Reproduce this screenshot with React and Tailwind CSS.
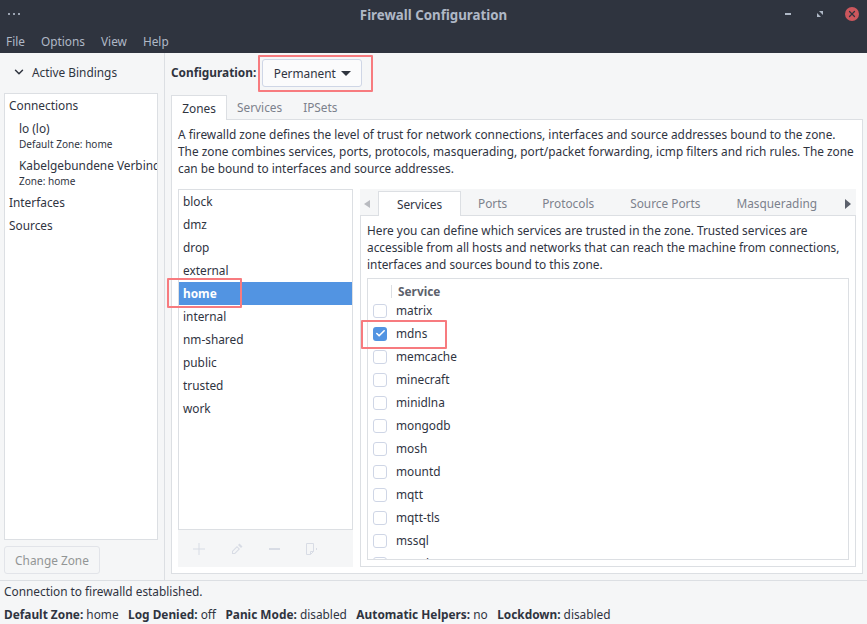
import { ChevronDown, Check, X } from "lucide-react";

const zones = ["block", "dmz", "drop", "external", "home", "internal", "nm-shared", "public", "trusted", "work"];
const services = ["matrix", "mdns", "memcache", "minecraft", "minidlna", "mongodb", "mosh", "mountd", "mqtt", "mqtt-tls", "mssql", "mysql"];

function Checkbox({ checked }) {
  if (checked) {
    return (
      <span className="flex h-[14px] w-[14px] items-center justify-center rounded-[3px] bg-[#5294e2]">
        <Check size={11} strokeWidth={3.5} className="text-white" />
      </span>
    );
  }
  return <span className="block h-[14px] w-[14px] rounded-[3px] border border-[#cfd6e6] bg-white" />;
}

function StatusItem({ label, value }) {
  return (
    <span>
      <b className="font-bold">{label}:</b> {value}
    </span>
  );
}

export default function App() {
  return (
    <div className="relative flex h-[624px] w-[867px] flex-col overflow-hidden bg-[#f5f6f7] font-['Noto_Sans',sans-serif] text-[11.85px] leading-[17px] text-[#2f343f]">
      <div className="bg-[#2f343f] text-[#afb8c6]">
        <div className="relative flex h-[30px] items-center justify-center">
          <div className="absolute left-[8px] top-[13px] flex gap-[3px]">
            <span className="block h-[2px] w-[2px] bg-[#9aa2b0]" />
            <span className="block h-[2px] w-[2px] bg-[#9aa2b0]" />
            <span className="block h-[2px] w-[2px] bg-[#9aa2b0]" />
          </div>
          <span className="text-[13.3px] font-bold">Firewall Configuration</span>
          <div className="absolute right-[8px] top-[7px] flex items-center">
            <span className="block h-[2px] w-[6px] bg-[#afb8c6]" />
            <svg width="6" height="6" viewBox="0 0 6 6" className="ml-[26px] text-[#afb8c6]">
              <path d="M2 0h4v4zM4 6H0V2z" fill="currentColor" />
            </svg>
            <span className="ml-[22px] flex h-[14px] w-[14px] items-center justify-center rounded-full bg-[#cc575d] text-[#2f343f]">
              <X size={10} strokeWidth={3} />
            </span>
          </div>
        </div>
        <div className="flex h-[23px] items-center gap-[16px] pl-[6px]">
          <span>File</span>
          <span>Options</span>
          <span>View</span>
          <span>Help</span>
        </div>
      </div>

      <div className="flex h-[527px]">
        <aside className="flex w-[165px] shrink-0 flex-col border-r border-[#dcdfe3] px-[4px] pb-[6px]">
          <div className="flex h-[40px] items-center gap-[6px] pb-[2px] pl-[8px]">
            <ChevronDown size={14} strokeWidth={2.5} />
            <span>Active Bindings</span>
          </div>
          <div className="h-[447px] w-[154px] overflow-hidden whitespace-nowrap border border-[#dcdfe3] bg-white pt-[3px]">
            <div className="pl-[4px]">Connections</div>
            <div className="mt-[6px] pl-[14px]">lo (lo)</div>
            <div className="pl-[14px] text-[10.05px] leading-[15px]">Default Zone: home</div>
            <div className="mt-[5px] w-[152px] overflow-hidden pl-[14px]">Kabelgebundene Verbindung</div>
            <div className="pl-[14px] text-[10.05px] leading-[15px]">Zone: home</div>
            <div className="mt-[5px] pl-[4px]">Interfaces</div>
            <div className="mt-[6px] pl-[4px]">Sources</div>
          </div>
          <div className="mt-[6px] flex h-[28px] w-[96px] items-center justify-center rounded-[3px] border border-[#e2e4e9] text-[#929595]">
            Change Zone
          </div>
        </aside>

        <main className="flex min-w-0 flex-1 flex-col pl-[6px] pr-[4px]">
          <div className="flex h-[42px] items-start pt-[6px]">
            <b className="mt-[5px] font-bold">Configuration:</b>
            <div className="ml-[6px] flex h-[28px] w-[100px] items-center justify-center gap-[5px] rounded-[3px] border border-[#cfd6e6] bg-[#fbfbfc]">
              Permanent
              <span className="mt-[1px] border-x-[5px] border-t-[5px] border-x-transparent border-t-[#2f343f]" />
            </div>
          </div>

          <div className="flex h-[24px] items-end">
            <div className="z-10 -mb-px flex h-[25px] w-[56px] items-center justify-center border border-b-0 border-[#dcdfe3] bg-white">Zones</div>
            <div className="flex h-[24px] items-center gap-[21px] pl-[10px] text-[#7c818c]">
              <span>Services</span>
              <span>IPSets</span>
            </div>
          </div>

          <div className="flex h-[455px] w-[692px] flex-col border border-[#dcdfe3] bg-white px-[6px] pb-[6px]">
            <p className="mt-[6px] h-[63px] whitespace-nowrap">
              A firewalld zone defines the level of trust for network connections, interfaces and source addresses bound to the zone.
              <br />
              The zone combines services, ports, protocols, masquerading, port/packet forwarding, icmp filters and rich rules. The zone
              <br />
              can be bound to interfaces and source addresses.
            </p>

            <div className="flex min-h-0 flex-1 gap-[7px]">
              <div className="flex w-[175px] flex-col">
                <div className="h-[341px] border border-[#dcdfe3] bg-white">
                  {zones.map((zone) => (
                    <div
                      key={zone}
                      className={
                        zone === "home"
                          ? "flex h-[23px] items-center bg-[#5294e2] pl-[4px] font-bold text-white"
                          : "flex h-[23px] items-center pl-[4px]"
                      }
                    >
                      {zone}
                    </div>
                  ))}
                </div>
                <div className="flex flex-1 items-center bg-[#f5f6f7] pl-[15px] text-[#d8dce5]">
                  <svg width="12" height="12" viewBox="0 0 12 12" fill="currentColor">
                    <path d="M5.5 0h1v5.5H12v1H6.5V12h-1V6.5H0v-1h5.5z" />
                  </svg>
                  <svg width="12" height="12" viewBox="0 0 12 12" fill="currentColor" className="ml-[26px]">
                    <path d="M8.5 0.5l3 3-1.5 1.5-3-3zM6 3l3 3-5 5H1V8zM2 8.5v1.5h1.5l4-4-1.5-1.5z" fillRule="evenodd" />
                  </svg>
                  <span className="ml-[26px] block h-[2px] w-[11px] bg-current" />
                  <svg width="12" height="12" viewBox="0 0 12 12" fill="none" stroke="currentColor" className="ml-[26px]">
                    <path d="M.5.5h7v8l-3 3h-4zM7.5 8.5h-3v3M10.5 5v2" />
                  </svg>
                </div>
              </div>

              <div className="flex min-w-0 flex-1 flex-col">
                <div className="flex h-[26px] items-end bg-[#f5f6f7]">
                  <span className="flex h-[23px] w-[18px] items-center pl-[4px]">
                    <span className="border-y-[4px] border-r-[6px] border-y-transparent border-r-[#b8babf]" />
                  </span>
                  <div className="z-10 -mb-px flex h-[25px] w-[83px] items-center justify-center border border-b-0 border-[#dcdfe3] bg-white">Services</div>
                  <div className="flex h-[24px] items-center text-[#7c818c]">
                    <span className="ml-[17px]">Ports</span>
                    <span className="ml-[35px]">Protocols</span>
                    <span className="ml-[36px]">Source Ports</span>
                    <span className="ml-[36px]">Masquerading</span>
                  </div>
                  <span className="ml-auto flex h-[23px] w-[11px] items-center">
                    <span className="border-y-[5px] border-l-[6px] border-y-transparent border-l-[#5c616c]" />
                  </span>
                </div>
                <div className="flex min-h-0 flex-1 flex-col border border-[#dcdfe3] px-[6px] pb-[6px]">
                  <p className="mt-[6px] h-[56px] whitespace-nowrap">
                    Here you can define which services are trusted in the zone. Trusted services are
                    <br />
                    accessible from all hosts and networks that can reach the machine from connections,
                    <br />
                    interfaces and sources bound to this zone.
                  </p>
                  <div className="min-h-0 flex-1 overflow-hidden border border-[#dcdfe3]">
                    <div className="flex h-[20px] items-center pl-[23px] pt-[4px] font-bold text-[#5c616c]">
                      <span className="flex h-[13px] items-center border-l border-[#dcdfe3] pl-[6px]">Service</span>
                    </div>
                    {services.map((service) => (
                      <div key={service} className="flex h-[23px] items-center gap-[9px] pl-[5px]">
                        <Checkbox checked={service === "mdns"} />
                        <span>{service}</span>
                      </div>
                    ))}
                  </div>
                </div>
              </div>
            </div>
          </div>
        </main>
      </div>

      <footer className="flex-1 border-t border-[#dcdfe3] pl-[4px]">
        <div className="pt-[2px]">Connection to firewalld established.</div>
        <div className="mt-[6px] flex gap-[9.5px] whitespace-nowrap">
          <StatusItem label="Default Zone" value="home" />
          <StatusItem label="Log Denied" value="off" />
          <StatusItem label="Panic Mode" value="disabled" />
          <StatusItem label="Automatic Helpers" value="no" />
          <StatusItem label="Lockdown" value="disabled" />
        </div>
      </footer>

      <span className="absolute left-[258px] top-[55px] h-[37px] w-[115px] rounded-[1px] border-2 border-[#f77b7f]" />
      <span className="absolute left-[167px] top-[278px] h-[30px] w-[75px] rounded-[1px] border-2 border-[#f77b7f]" />
      <span className="absolute left-[361px] top-[320px] h-[29px] w-[86px] rounded-[1px] border-2 border-[#f77b7f]" />
    </div>
  );
}
